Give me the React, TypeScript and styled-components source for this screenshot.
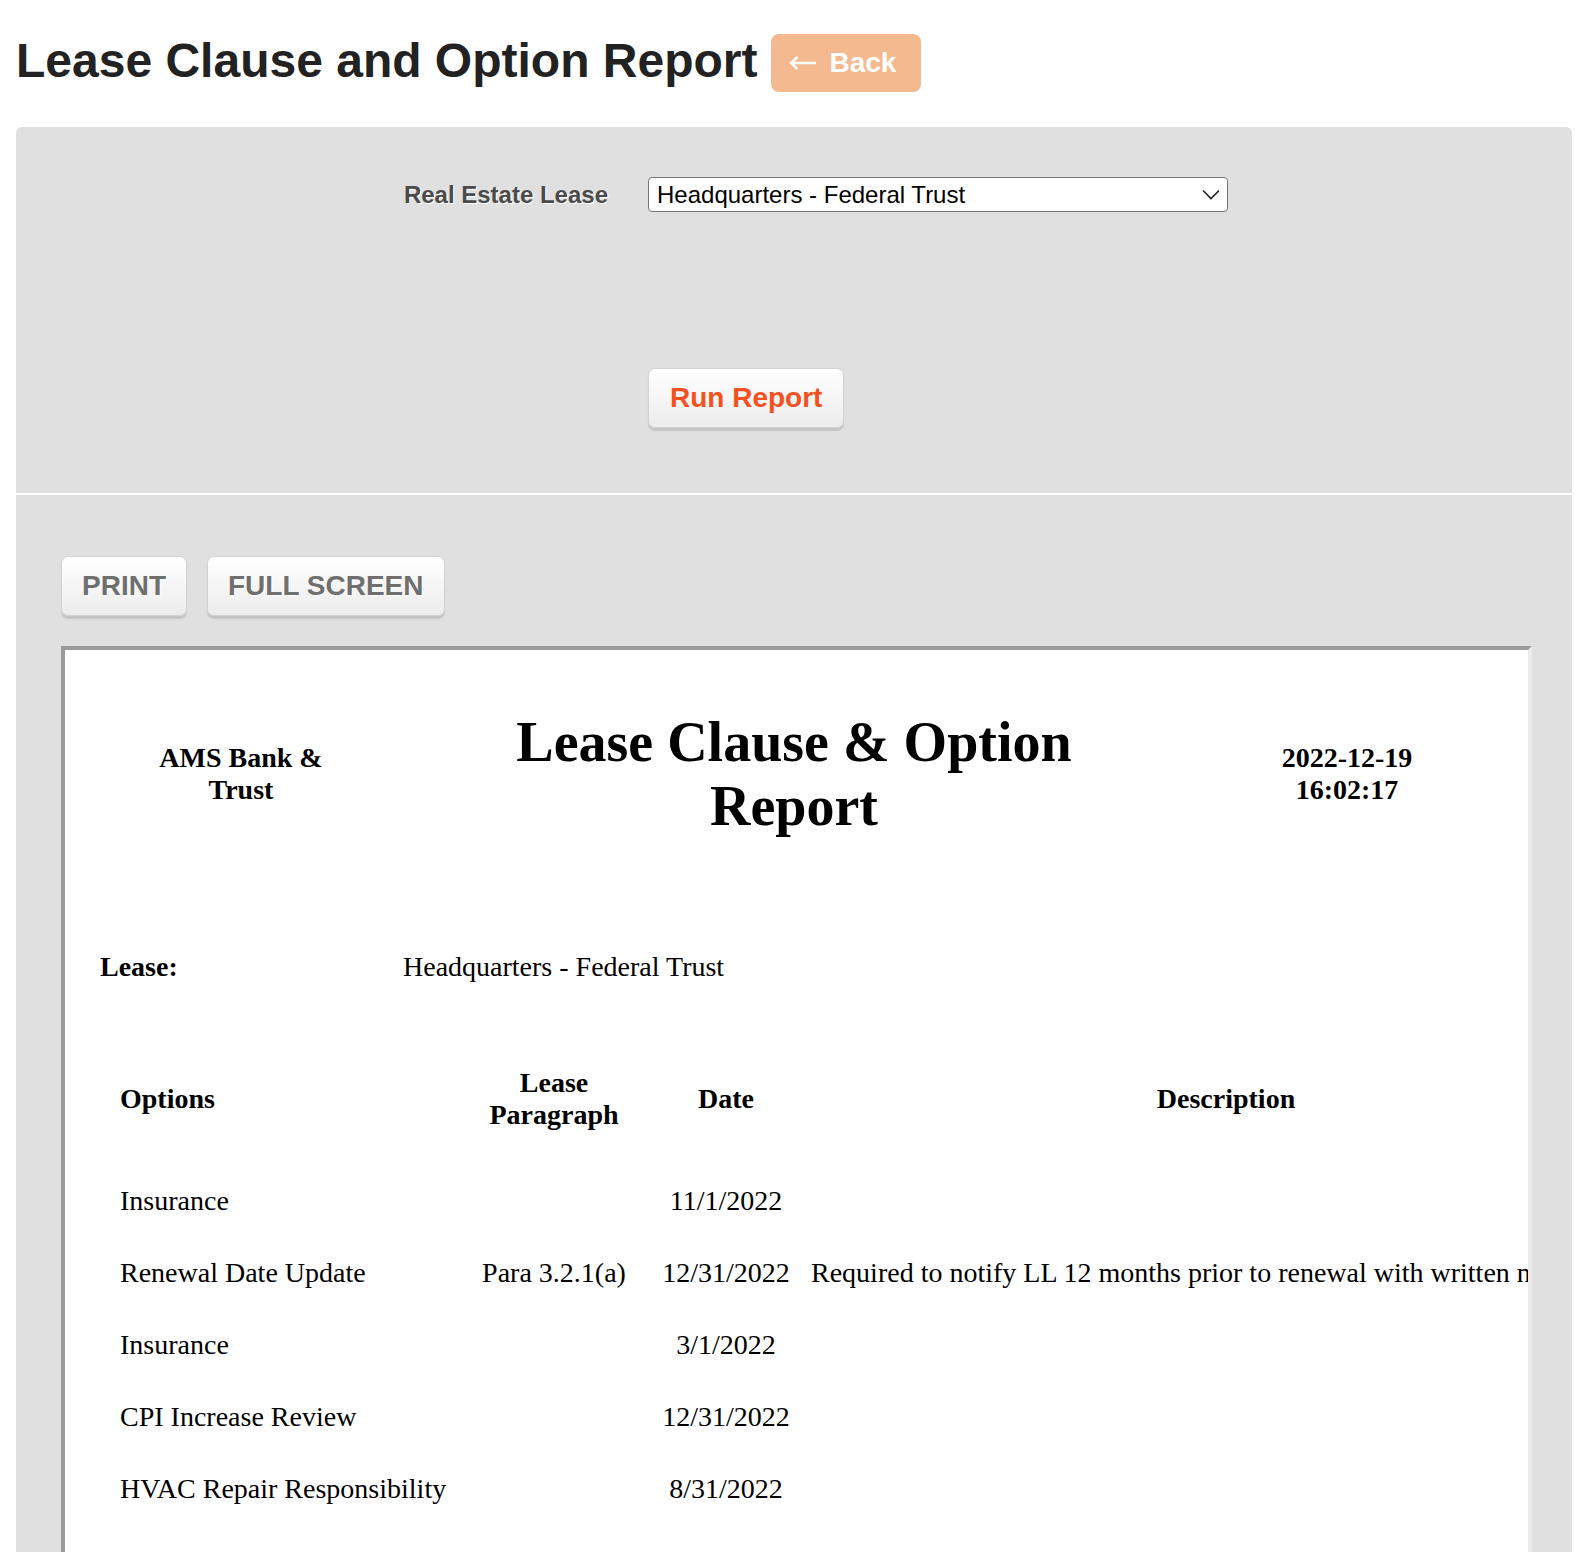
import styled, { createGlobalStyle } from 'styled-components'

const GlobalStyle = createGlobalStyle`
  html, body {
    margin: 0;
    padding: 0;
    background: #fff;
    overflow: hidden;
  }
  body {
    font-family: "Liberation Sans", Arial, Helvetica, sans-serif;
  }
`

const Page = styled.div`
  display: flex;
  flex-direction: column;
  height: 100vh;
  overflow: hidden;
  padding: 0 16px;
  box-sizing: border-box;
`

const Header = styled.header`
  align-items: center;
  display: flex;
  gap: 14px;
  padding: 34px 0 35px;
`

const Title = styled.h1`
  color: #222;
  font-size: 48px;
  font-weight: bold;
  line-height: 1.1;
  margin: 0;
  padding-bottom: 4px;
`

const BackButton = styled.button`
  align-items: center;
  background: #f4b98e;
  border: none;
  border-radius: 8px;
  color: #fff;
  cursor: pointer;
  display: flex;
  font-family: inherit;
  font-size: 28px;
  font-weight: bold;
  gap: 12px;
  height: 58px;
  padding: 0 25px 0 18px;
`

const Panel = styled.section`
  background: #e0e0e0;
  border-radius: 6px 6px 0 0;
  display: flex;
  flex: 1;
  flex-direction: column;
  min-height: 0;
  overflow: hidden;
`

const FormSection = styled.div`
  border-bottom: 2px solid #fff;
  display: flex;
  flex-direction: column;
  padding: 50px 0 65px;
`

const FormRow = styled.div<{ $top?: number }>`
  align-items: center;
  display: grid;
  grid-template-columns: 632px 580px;
  margin-top: ${({ $top }) => $top ?? 0}px;
`

const Label = styled.label`
  color: #4a4a4a;
  font-size: 24px;
  font-weight: bold;
  padding-right: 40px;
  text-align: right;
  text-shadow: 1px 1px 0 #fff;
`

const SelectWrap = styled.div`
  position: relative;
`

const Select = styled.select`
  appearance: none;
  background: #fff;
  border: 1px solid #767676;
  border-radius: 4px;
  box-sizing: border-box;
  color: #000;
  font-family: inherit;
  font-size: 24px;
  height: 35px;
  padding: 0 40px 0 8px;
  width: 580px;
`

const Chevron = styled.svg`
  pointer-events: none;
  position: absolute;
  right: 8px;
  top: 12px;
`

const ChunkyButton = styled.button<{ $accent?: boolean }>`
  background: linear-gradient(#ffffff, #ececec);
  border: 1px solid #d2d2d2;
  border-radius: 7px;
  box-shadow: 0 3px 1px rgba(0, 0, 0, 0.12);
  color: ${({ $accent }) => ($accent ? '#f4511e' : '#6f6f6f')};
  cursor: pointer;
  font-family: inherit;
  font-size: 28px;
  font-weight: bold;
  height: 60px;
  padding: 0 ${({ $accent }) => ($accent ? 21 : 20)}px;
  text-shadow: ${({ $accent }) => ($accent ? 'none' : '1px 1px 0 #fff')};
  width: fit-content;
`

const ReportSection = styled.div`
  display: flex;
  flex-direction: column;
  padding: 61px 40px 0 45px;
`

const Toolbar = styled.div`
  display: flex;
  gap: 20px;
  margin-bottom: 30px;
`

const Frame = styled.div`
  background: #fff;
  border-style: solid;
  border-width: 4px;
  border-color: #9a9a9a #ebebeb #ebebeb #9a9a9a;
  box-sizing: border-box;
  color: #000;
  font-family: "Liberation Serif", "Times New Roman", serif;
  height: 1100px;
  overflow: hidden;
  padding-top: 60px;
`

const DocHeader = styled.div`
  align-items: center;
  display: grid;
  grid-template-columns: 200px 700px 200px;
  column-gap: 103px;
  margin-left: 76px;
`

const SideNote = styled.div`
  font-size: 28px;
  font-weight: bold;
  line-height: 32px;
  text-align: center;
`

const DocTitle = styled.h2`
  font-size: 56px;
  font-weight: bold;
  line-height: 1.15;
  margin: 0;
  text-align: center;
`

const LeaseRow = styled.div`
  display: grid;
  font-size: 28px;
  grid-template-columns: 303px 1fr;
  line-height: 32px;
  margin: 112px 0 0 35px;
`

const LeaseLabel = styled.span`
  font-weight: bold;
`

const DataTable = styled.table`
  border-collapse: collapse;
  font-size: 28px;
  line-height: 32px;
  margin: 84px 0 0 55px;
  table-layout: fixed;
  width: 1524px;
`

const Th = styled.th<{ $align?: string }>`
  font-weight: bold;
  padding: 0 0 34px;
  text-align: ${({ $align }) => $align ?? 'center'};
  vertical-align: middle;
`

const Td = styled.td<{ $align?: string; $indent?: number }>`
  padding: 20px 0 20px ${({ $indent }) => $indent ?? 0}px;
  text-align: ${({ $align }) => $align ?? 'center'};
  white-space: nowrap;
`

const rows = [
  { option: 'Insurance', para: '', date: '11/1/2022', desc: '' },
  {
    option: 'Renewal Date Update',
    para: 'Para 3.2.1(a)',
    date: '12/31/2022',
    desc: 'Required to notify LL 12 months prior to renewal with written notice.',
  },
  { option: 'Insurance', para: '', date: '3/1/2022', desc: '' },
  { option: 'CPI Increase Review', para: '', date: '12/31/2022', desc: '' },
  { option: 'HVAC Repair Responsibility', para: '', date: '8/31/2022', desc: '' },
]

const LeftArrow = () => (
  <svg width="28" height="16" viewBox="0 0 28 16" aria-hidden="true">
    <path
      d="M27 8 H2.5 M8.5 2 L2 8 L8.5 14"
      fill="none"
      stroke="#fff"
      strokeWidth="2.4"
      strokeLinecap="butt"
      strokeLinejoin="miter"
    />
  </svg>
)

export default function App() {
  return (
    <>
      <GlobalStyle />
      <Page>
        <Header>
          <Title>Lease Clause and Option Report</Title>
          <BackButton aria-label="← Back">
            <LeftArrow />
            <span>Back</span>
          </BackButton>
        </Header>

        <Panel>
          <FormSection>
            <FormRow>
              <Label htmlFor="lease">Real Estate Lease</Label>
              <SelectWrap>
                <Select id="lease" defaultValue="hq">
                  <option value="hq">Headquarters - Federal Trust</option>
                </Select>
                <Chevron width="18" height="11" viewBox="0 0 18 11">
                  <path d="M1 1.5 L9 9.5 L17 1.5" fill="none" stroke="#222" strokeWidth="1.6" />
                </Chevron>
              </SelectWrap>
            </FormRow>
            <FormRow $top={156}>
              <span />
              <ChunkyButton $accent>Run Report</ChunkyButton>
            </FormRow>
          </FormSection>

          <ReportSection>
            <Toolbar>
              <ChunkyButton>PRINT</ChunkyButton>
              <ChunkyButton>FULL SCREEN</ChunkyButton>
            </Toolbar>

            <Frame>
              <DocHeader>
                <SideNote>AMS Bank &amp; Trust</SideNote>
                <DocTitle>Lease Clause &amp; Option Report</DocTitle>
                <SideNote>2022-12-19 16:02:17</SideNote>
              </DocHeader>

              <LeaseRow>
                <LeaseLabel>Lease:</LeaseLabel>
                <span>Headquarters - Federal Trust</span>
              </LeaseRow>

              <DataTable>
                <colgroup>
                  <col style={{ width: 344 }} />
                  <col style={{ width: 180 }} />
                  <col style={{ width: 164 }} />
                  <col style={{ width: 836 }} />
                </colgroup>
                <thead>
                  <tr>
                    <Th $align="left">Options</Th>
                    <Th>
                      Lease
                      <br />
                      Paragraph
                    </Th>
                    <Th>Date</Th>
                    <Th>Description</Th>
                  </tr>
                </thead>
                <tbody>
                  {rows.map((r, i) => (
                    <tr key={i}>
                      <Td $align="left">{r.option}</Td>
                      <Td>{r.para}</Td>
                      <Td>{r.date}</Td>
                      <Td $align="left" $indent={3}>
                        {r.desc}
                      </Td>
                    </tr>
                  ))}
                </tbody>
              </DataTable>
            </Frame>
          </ReportSection>
        </Panel>
      </Page>
    </>
  )
}
